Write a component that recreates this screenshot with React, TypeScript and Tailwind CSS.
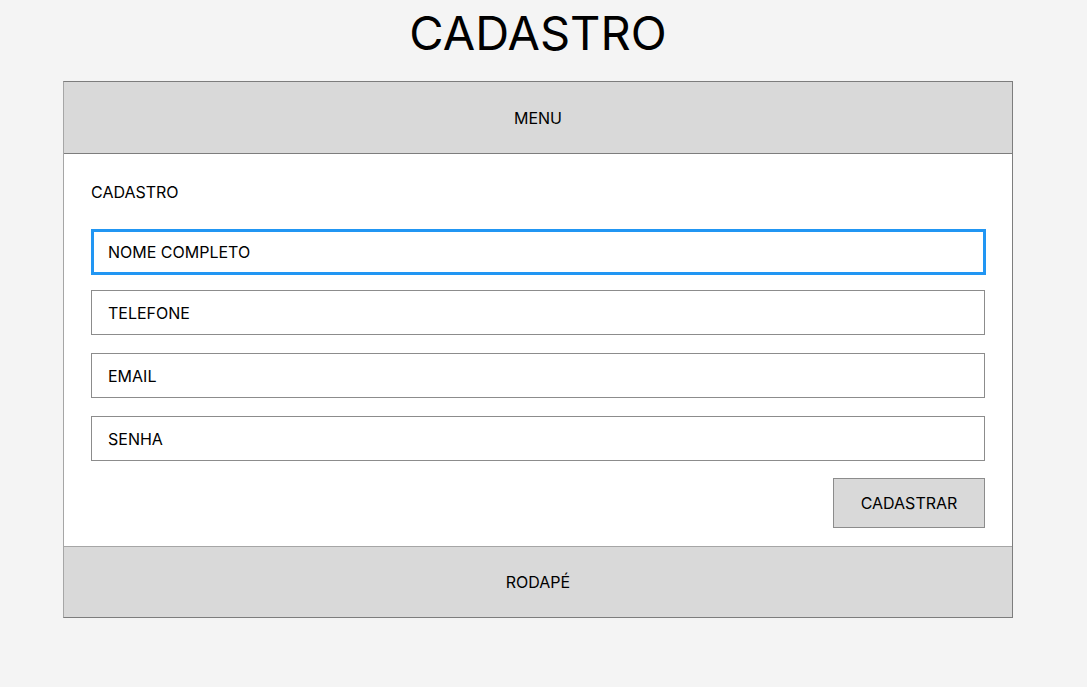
const fields = ['TELEFONE', 'EMAIL', 'SENHA']

export default function App() {
  return (
    <div className="min-h-[687px] bg-[#f4f4f4] font-['Inter',sans-serif] text-black">
      <div className="mx-[63px] w-[950px]">
        <h1 className="pt-[4px] text-center text-[47px] leading-[58px] font-normal">CADASTRO</h1>

        <div className="mt-[19px] border border-[#7d7d7d] border-l-[#a6a6a6]">
          <div className="flex h-[72px] items-center justify-center border-b border-[#7d7d7d] bg-[#d9d9d9] text-[16px]">
            MENU
          </div>

          <div className="bg-white px-[27px] pt-[26px] pb-[18px]">
            <div className="text-[16px] leading-[24px]">CADASTRO</div>

            <div className="mt-[25px] flex h-[46px] w-[895px] items-center border-[3px] border-[#2196f3] px-[14px] text-[16px]">
              NOME COMPLETO
            </div>

            {fields.map((f, i) => (
              <div
                key={f}
                className={`flex h-[45px] w-[894px] items-center border border-[#8c8c8c] px-[16px] text-[16px] ${i === 0 ? 'mt-[15px]' : 'mt-[18px]'}`}
              >
                {f}
              </div>
            ))}

            <div className="mt-[17px] flex w-[894px] justify-end">
              <button className="h-[50px] w-[152px] border border-[#8c8c8c] bg-[#d9d9d9] text-[16px]">
                CADASTRAR
              </button>
            </div>
          </div>

          <div className="flex h-[71px] items-center justify-center border-t border-[#a6a6a6] bg-[#d9d9d9] text-[16px]">
            RODAPÉ
          </div>
        </div>
      </div>
    </div>
  )
}
